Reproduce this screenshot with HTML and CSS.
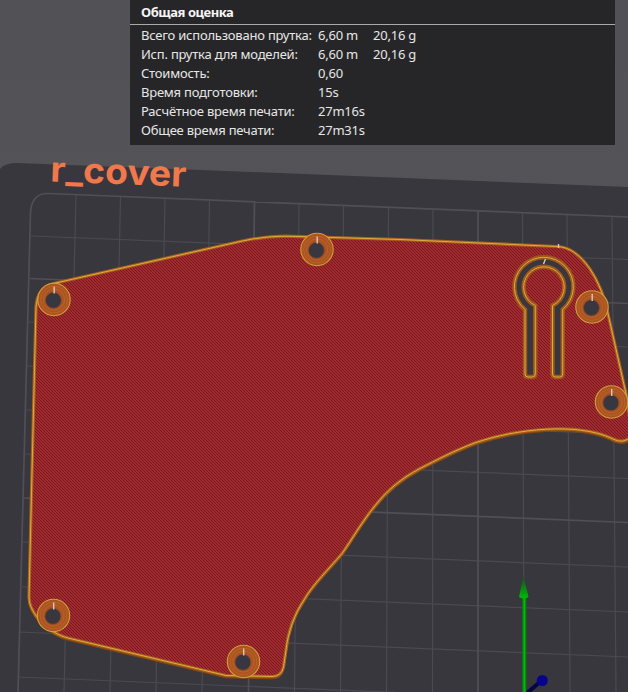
FILE: index.html
```html
<!DOCTYPE html>
<html lang="ru">
<head>
<meta charset="utf-8">
<title>r_cover</title>
<link rel="stylesheet" href="styles.css">
</head>
<body>
<main class="viewport">
<svg class="scene" viewBox="0 0 628 692" width="628" height="692">
  <defs>
    <pattern id="infill" width="3" height="3" patternUnits="userSpaceOnUse">
      <rect class="infill-base" width="3" height="3"/>
      <path class="infill-line" d="M-1-1L4 4M-1 2L1 4M2-1L4 1"/>
    </pattern>
    <linearGradient id="cone" x1="0" y1="0" x2="0" y2="1">
      <stop offset="0" stop-color="#174c22"/><stop offset="1" stop-color="#00b808"/>
    </linearGradient>
    <linearGradient id="back" x1="0" y1="0" x2="0" y2="1">
      <stop offset="0" stop-color="#525156"/><stop offset="1" stop-color="#58575c"/>
    </linearGradient>
    <g id="boss">
      <circle class="boss-body" r="16"/>
      <circle class="boss-ring" r="13.4"/>
      <circle class="boss-ring" r="10.6"/>
      <circle class="boss-edge" r="16.2"/>
      <circle class="boss-hole" cx="-.6" cy=".8" r="8"/>
      <path class="seam" d="M.2-13V-6"/>
    </g>
    <path id="outline" d="M53.500 283.500L240 241.500Q266 235.500 292 236.300L400 239.500L557 246.500C582 247 602 282 608.500 316L627 398L632 436Q623 445 612 438.500C577 422 516 429 476 442.500C453 451 437 460 420 468.500C402 478 387 490 374 507C359 526 353 538 342 553.500C329 569 313 584 304 600C295 613 288 632 286 650L283.500 667Q281.500 676.500 272 676.500L226 675.500L68 638C51 634 29 615 29 597L36 307Q37 288 53.500 283.500Z"/>
    <path id="slot" d="M525 309.500A29.500 29.500 0 1 1 562.700 309.500V374Q562.700 377 559.700 377H555.500Q552.500 377 552.500 374V305.500A20.300 20.300 0 1 0 535.300 305.500V374Q535.300 377 532.300 377H528Q525 377 525 374Z"/>
  </defs>

  <rect class="backdrop" width="628" height="692"/>
  <path class="bed" d="M0 169Q4 163.500 16 163L220 170.700L628 187V692H0Z"/>

  <g class="grid">
    <path d="M76 195L64 692M120.500 196.500L110 692M165 198L156 692M209.500 199.500L202 692M299 203L294.500 692M343.500 205L340.500 692M388.500 207L386.500 692M433 209L432.500 692M522.500 212L524 692M567 214L570 692M612 216L616 692"/>
    <path d="M31 236L628 259.500M28 322L628 347M27 366L628 390.500M26 410L628 434.500M25 454L628 478.500M23 542L628 567M22 587L628 612M19 632L628 657M18 677L628 702"/>
    <path class="grid-major" d="M254.500 201L248.500 692M478 210.500V692M30 278.500L628 303.500M24 498L628 522.500M18 692L30.500 212Q32 193 48 193.500L628 217"/>
  </g>

  <g transform="translate(50 181.500) rotate(2.200)"><text class="plate-name" textLength="136" lengthAdjust="spacingAndGlyphs">r_cover</text></g>

  <use href="#outline" class="wall-side" y="1.800"/>
  <use href="#outline" class="part"/>
  <use href="#outline" class="wall-outer"/>
  <use href="#outline" class="wall-inner"/>

  <use href="#slot" class="slot-wall"/>
  <use href="#slot" class="slot-edge"/>
  <path class="seam" d="M545.500 259L543.500 264M558.500 244V248"/>

  <use href="#boss" x="54" y="299.500"/>
  <use href="#boss" x="317" y="249.500"/>
  <use href="#boss" x="592" y="307"/>
  <use href="#boss" x="611.500" y="402"/>
  <use href="#boss" x="53.500" y="615.500"/>
  <use href="#boss" x="243.500" y="661.500"/>

  <path class="axis-z" d="M526 694L541 681"/>
  <circle class="axis-z-tip" cx="542.300" cy="680.500" r="5.500"/>
  <path class="axis-y" d="M524.300 597V692"/>
  <path class="axis-y-light" d="M524.300 597V692"/>
  <path fill="url(#cone)" d="M523.500 576L528.500 597Q524 600 519 597Z"/>
</svg>

<section class="summary">
  <h1 class="summary-title">Общая оценка</h1>
  <dl class="stats">
    <dt>Всего использовано прутка:</dt><dd>6,60 m</dd><dd>20,16 g</dd>
    <dt>Исп. прутка для моделей:</dt><dd>6,60 m</dd><dd>20,16 g</dd>
    <dt>Стоимость:</dt><dd class="wide">0,60</dd>
    <dt>Время подготовки:</dt><dd class="wide">15s</dd>
    <dt>Расчётное время печати:</dt><dd class="wide">27m16s</dd>
    <dt>Общее время печати:</dt><dd class="wide">27m31s</dd>
  </dl>
</section>
</main>
</body>
</html>
```
FILE: styles.css
```css
* { box-sizing: border-box; }
body { margin: 0; background: #55545a; font-family: "Noto Sans", sans-serif; }
.viewport { position: relative; width: 628px; height: 692px; overflow: hidden; }
.scene { position: absolute; inset: 0; display: block; }

.summary {
  position: relative;
  width: 485px;
  height: 145px;
  margin-left: 130px;
  background: #262628;
  color: #e6e6e7;
  font-size: 13px;
}
.summary-title {
  margin: 0;
  height: 25px;
  padding-left: 11px;
  border-bottom: 1px solid #aaaaac;
  font-size: 13px;
  font-weight: 700;
  line-height: 25px;
  letter-spacing: -.45px;
  color: #f5f5f5;
}
.stats {
  display: grid;
  grid-template-columns: 177px 55px 1fr;
  grid-auto-rows: 19px;
  margin: 0;
  padding: 1px 0 0 11px;
  line-height: 19px;
  letter-spacing: -.22px;
  white-space: nowrap;
}
.stats dd { margin: 0; }
.stats .wide { grid-column: 2 / 4; }

.backdrop { fill: url(#back); }
.bed { fill: #38373d; }
.grid { fill: none; stroke: #4b4a52; stroke-width: 1.2; }
.grid-major { stroke: #504f57; stroke-width: 1.7; }
.plate-name { font: 700 35px Inter, sans-serif; fill: #f0784c; }

.infill-base { fill: #a32a2f; }
.infill-line { stroke: #741a1e; stroke-width: 1; }
.part { fill: url(#infill); }
.wall-side { fill: #864510; stroke: #864510; stroke-width: 2; }
.wall-outer { fill: none; stroke: #a8601e; stroke-width: 3.2; }
.wall-inner { fill: none; stroke: #dcac40; stroke-width: 1; }

.slot-wall { fill: #38373d; stroke: #a0561e; stroke-width: 4.4; }
.slot-edge { fill: none; stroke: #d8ad35; stroke-width: 1; }

.boss-body { fill: #ab5421; }
.boss-ring { fill: none; stroke: #bd662b; stroke-width: .8; }
.boss-edge { fill: none; stroke: #d2a23a; stroke-width: 1.1; }
.boss-hole { fill: #38373f; stroke: #8a4a28; stroke-width: .8; }
.seam { fill: none; stroke: #d8c9c0; stroke-width: 1.4; }

.axis-y { stroke: #008c0a; stroke-width: 4; }
.axis-y-light { stroke: #06b512; stroke-width: 1.6; }
.axis-z { stroke: #050545; stroke-width: 4; }
.axis-z-tip { fill: #04048c; }
```
